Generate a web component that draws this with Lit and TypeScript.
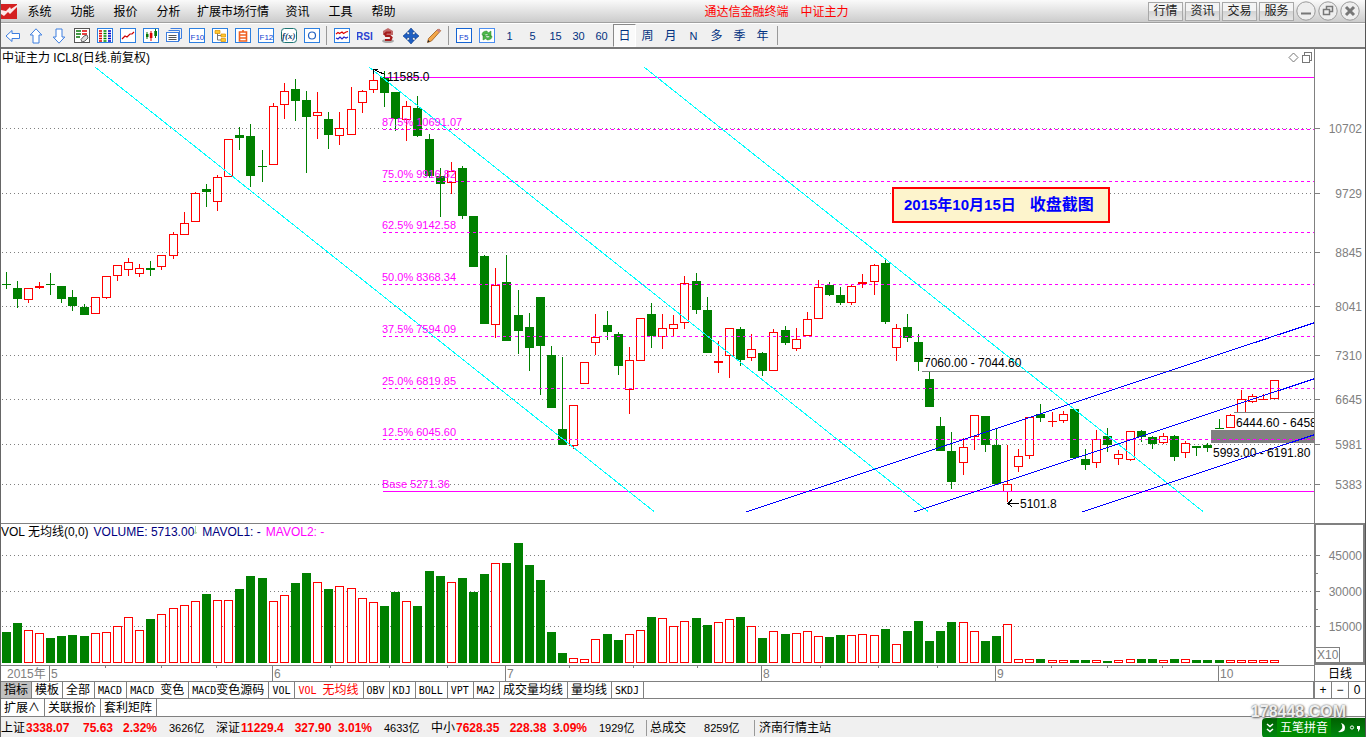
import { LitElement, html, svg, css } from "lit";
import { customElement } from "lit/decorators.js";
import { classMap } from "lit/directives/class-map.js";

type Candle = [rise: number, high: number, top: number, bottom: number, low: number, volumeTop: number];

const CANDLES: Candle[] = [
  [0,272,284,285,289,632],[0,281,288,299,308,623],[1,288,288,300,303,630],[1,282,286,288,289,633],[0,273,284,285,295,638],
  [0,286,286,299,303,636],[0,290,297,306,311,635],[0,304,307,315,315,636],[1,297,297,314,314,633],[1,276,276,298,299,632],
  [1,265,265,276,281,626],[1,258,262,270,276,617],[1,264,268,274,277,630],[0,261,268,270,276,619],[1,255,255,267,270,614],
  [1,232,234,256,259,608],[1,212,223,235,235,605],[1,192,193,222,222,601],[0,184,189,192,207,594],[1,175,177,202,211,600],
  [1,139,139,177,177,600],[0,127,135,138,150,589],[0,124,136,176,187,576],[0,150,166,167,182,578],[1,103,106,165,165,601],
  [1,83,91,105,119,595],[0,79,89,101,121,583],[0,91,100,117,173,573],[1,92,112,116,139,582],[0,112,119,135,149,589],
  [1,112,128,136,145,586],[1,87,109,135,135,588],[1,90,91,103,113,598],[1,72,80,90,93,602],[0,71,77,93,107,606],
  [0,92,92,119,131,592],[1,101,106,120,141,601],[0,96,108,136,137,606],[0,134,139,176,178,571],[0,168,176,184,217,576],
  [1,162,171,183,194,582],[0,166,168,216,219,578],[0,216,216,267,267,592],[0,255,256,324,324,574],[1,268,285,325,338,563],
  [0,255,282,341,341,563],[0,290,315,331,354,543],[0,313,327,348,371,565],[0,297,297,346,395,580],[0,346,355,408,408,632],
  [0,357,429,445,445,653],[1,405,405,446,449,658],[1,362,362,384,384,659],[1,314,337,343,355,639],[0,311,325,332,340,634],
  [0,332,334,366,375,640],[1,347,360,390,414,634],[1,318,318,361,361,630],[0,303,314,336,348,617],[1,314,328,337,349,618],
  [1,315,324,329,336,626],[1,276,283,323,329,621],[0,273,281,310,314,618],[0,297,310,353,353,625],[1,341,361,363,373,622],
  [1,328,328,356,378,619],[0,327,329,360,366,617],[1,334,349,358,361,626],[0,352,353,371,376,638],[1,329,332,371,371,631],
  [0,326,330,343,345,634],[1,328,339,349,351,633],[1,312,319,336,336,631],[1,280,287,319,319,636],[0,282,285,295,296,637],
  [0,287,295,303,305,635],[1,285,286,303,305,635],[1,274,282,284,288,634],[1,264,265,282,295,635],[0,259,263,322,324,629],
  [1,324,328,348,361,644],[0,314,327,338,342,631],[0,334,342,362,371,621],[0,372,379,407,407,641],[0,417,426,451,451,631],
  [0,432,451,482,489,622],[1,438,447,463,475,622],[1,415,415,437,450,631],[0,416,416,445,452,641],[0,428,445,484,484,636],
  [1,445,484,492,502,624],[1,449,456,467,472,659],[1,417,417,456,459,659],[0,404,414,418,422,659],[1,412,421,422,427,660],
  [1,411,414,421,423,660],[0,409,409,458,458,660],[0,449,459,465,470,660],[1,430,439,463,468,660],[0,428,436,445,452,661],
  [1,450,454,459,465,660],[1,431,431,460,461,659],[0,430,431,437,442,659],[0,436,437,444,449,659],[1,433,436,443,444,660],
  [0,435,436,457,461,659],[1,441,443,453,458,659],[0,446,446,448,456,660],[0,443,445,448,452,660],[0,419,428,429,429,660],
  [1,414,415,428,428,660],[1,390,399,413,413,660],[1,394,396,402,403,660],[1,394,399,400,400,660],[1,380,380,399,399,660],
];

const centre = (i: number) => Math.floor(6.18 + 11.127 * i);

const PRICES: [number, string][] = [
  [128, "10702"], [193, "9729"], [252, "8845"], [306, "8041"],
  [355, "7310"], [399, "6645"], [444, "5981"], [484, "5383"],
];

const LEVELS: [number, string][] = [
  [129, "87.5% 10691.07"], [181, "75.0% 9916.82"], [232, "62.5% 9142.58"], [284, "50.0% 8368.34"],
  [336, "37.5% 7594.09"], [388, "25.0% 6819.85"], [439, "12.5% 6045.60"], [491, "Base 5271.36"],
];

const VOLUMES: [number, string][] = [[555, "45000"], [591, "30000"], [626, "15000"]];

const MONTHS: [number, string][] = [[49, "5"], [272, "6"], [505, "7"], [761, "8"], [995, "9"], [1218, "10"]];
const WEEKS = [105, 161, 216, 330, 389, 447, 569, 633, 697, 820, 878, 937, 1051, 1107, 1162];

const frame = svg`<rect x="0.5" y="0.5" width="15" height="14" fill="#fff" stroke="#2c7fe0"/>`;

const ICONS: Record<string, unknown> = {
  后退: svg`<path d="M1 8L7 2.5V5.5H14.500V10.5H7V13.5Z" fill="#fff" stroke="#3d7ee0"/>`,
  向上: svg`<path d="M8 .8L13.8 7H11V15H5V7H2.2Z" fill="#fff" stroke="#3d7ee0"/>`,
  向下: svg`<path d="M8 15.2L13.8 9H11V1H5V9H2.2Z" fill="#fff" stroke="#3d7ee0"/>`,
  自选: svg`<rect x=".5" y=".5" width="15" height="14" fill="#fff" stroke="#555"/><path d="M2 3h5M2 6h5M2 9h4" stroke="#087808" stroke-width="1.4"/><path d="M8 3h5M8 6h5" stroke="#d00" stroke-width="1.4"/><path d="M7 11.500l3-3.500 3-1 1 3-3 3-3 1z" fill="#ddd" stroke="#666"/>`,
  行情表: svg`${frame}<path d="M2 3h3M2 5.500h3M2 8h3M2 10.500h3M2 13h3" stroke="#d00" stroke-width="1.300"/><path d="M6.500 3h3M6.500 5.500h3M6.500 8h3M6.500 10.500h3M6.500 13h3" stroke="#080" stroke-width="1.300"/><path d="M11 3h3M11 5.500h3M11 8h3M11 10.500h3M11 13h3" stroke="#00c" stroke-width="1.300"/>`,
  分时图: svg`${frame}<path d="M2 11l3-3 2 1 3-3h2l2-2" fill="none" stroke="#c00" stroke-width="1.2"/>`,
  K线图: svg`${frame}<path d="M4 4v7M12.500 1v9" stroke="#087808"/><path d="M8 3v10" stroke="#d00"/><path d="M3 6h2.500v3H3zM11.300 3H14v5h-2.700z" fill="#087808"/><path d="M6.800 5h2.600v5H6.800z" fill="#d00"/>`,
  多窗口: svg`<path d="M4.500 .5h11v10h-2M2.500 2.500h11v10h-1" fill="none" stroke="#3d7ee0"/><rect x=".5" y="4.500" width="12" height="9" fill="#fff" stroke="#3d7ee0"/><path d="M2.500 7.500h8M2.500 9.500h8M2.500 11.500h8" stroke="#555"/>`,
  基本资料: svg`${frame}<text x="1.500" y="11.500" class="tiny">F10</text>`,
  树状: svg`${frame}<path d="M5.500 5v7H9M5.500 7.500H9" fill="none" stroke="#777"/><path d="M3 2.500h5v3H3zM9 6h4.500v3H9zM9 10.500h4.500v3H9z" fill="#ffc830" stroke="#d89000" stroke-width=".7"/>`,
  自定: svg`${frame}<path d="M4.500 4h7v9h-7zM4.500 7h7M4.500 10h7M8 4V2" fill="none" stroke="#f06020" stroke-width="1.600"/>`,
  F12: svg`${frame}<text x="1.500" y="11.500" class="tiny">F12</text>`,
  公式: svg`<rect x=".5" y=".5" width="15" height="14" rx="3" fill="#fff" stroke="#1b7474"/><text x="1" y="11" class="fx">f(x)</text>`,
  圆: svg`${frame}<circle cx="8" cy="7.500" r="3.500" fill="none" stroke="#2060c0" stroke-width="1.200"/>`,
  指标: svg`${frame}<path d="M2 6l2-1.500 1.500 1L8 4l1.500 1.500L12 4l2-.5" fill="none" stroke="#d00" stroke-width="1.200"/><path d="M2 10l2 1 2-2 2 2 2-2 2 1 2-1" fill="none" stroke="#22c" stroke-width="1.200"/>`,
  RSI: svg`<text x="-1" y="11.500" class="rsi">RSI</text>`,
  资金: svg`<path d="M3 3l5-3 5 3v4H3z" fill="#c06a6a"/><ellipse cx="8" cy="13" rx="6" ry="2" fill="#aaa"/><path d="M11 4.500H6.500L5 6l1 2h4l1.500 1.500-1 2.500H5" fill="none" stroke="#a51c1c" stroke-width="2.200"/>`,
  移动: svg`<path d="M8 0l3.500 4h-2v2.500H12v-2L16 8l-4 3.500v-2H9.500V12h2L8 16l-3.500-4h2V9.500H4v2L0 8l4-3.500v2h2.500V4h-2z" fill="#1e5fc4" stroke="#0d3c88" stroke-width=".6"/>`,
  画线: svg`<path d="M1.500 14.500l1-4 9-9q2-1 3.200 1.200L5.500 13z" fill="#f2a64a" stroke="#9a5a20" stroke-width=".8"/><path d="M1.500 14.500l.6-2.500 1.800 1.600z" fill="#222"/><path d="M10.500 2.500l1.200-1.200q2-.8 3 1.400l-1.500 1.800z" fill="#c98080"/>`,
  F5: svg`<rect x=".5" y=".5" width="15" height="14" fill="#fff" stroke="#1463d2"/><text x="3" y="11.500" class="tiny">F5</text>`,
  刷新: svg`<rect x=".5" y=".5" width="15" height="14" fill="#fff" stroke="#4c8ef0"/><path d="M3 7q0-4 5-4l1 2 3-2v5H8l1.500-1.500Q6 5 5 8zM13 8q0 4-5 4l-1-1.500L4 12V7.500h4L6.500 9q3.500 2 4.500-1z" fill="#4cb848" stroke="#2e8a2e" stroke-width=".5"/>`,
};

const GROUPS = [
  ["后退", "向上", "向下", "自选", "行情表", "分时图", "K线图", "多窗口", "基本资料", "树状", "自定", "F12", "公式", "圆"],
  ["指标", "RSI", "资金", "移动", "画线"],
  ["F5", "刷新"],
];
const PERIODS = ["1", "5", "15", "30", "60", "日", "周", "月", "N", "多", "季", "年"];
const MENUS = ["系统", "功能", "报价", "分析", "扩展市场行情", "资讯", "工具", "帮助"];
const TABS = ["指标", "模板", "全部", "MACD", "MACD 变色", "MACD变色源码", "VOL", "VOL 无均线", "OBV", "KDJ", "BOLL", "VPT", "MA2", "成交量均线", "量均线", "SKDJ"];
const QUOTES = [
  ["上证", "3338.07", "75.63", "2.32%", "3626亿"],
  ["深证", "11229.4", "327.90", "3.01%", "4633亿"],
  ["中小", "7628.35", "228.38", "3.09%", "1929亿"],
];

@customElement("app-root")
export class AppRoot extends LitElement {
  static styles = css`
    :host {
      display: flex;
      flex-direction: column;
      position: relative;
      box-sizing: border-box;
      min-height: 100vh;
      overflow: hidden;
      border-left: 1px solid #666;
      border-right: 1px solid #555;
      background: #fff;
      color: #000;
      font: 12px/16px "Liberation Sans", "Noto Sans CJK SC", sans-serif;
    }
    button { font: inherit; color: inherit; padding: 0; margin: 0; border: 0; background: none; white-space: nowrap; }
    svg { display: block; overflow: hidden; }

    .menubar {
      display: flex;
      align-items: center;
      height: 22px;
      border-bottom: 1px solid #a0a0a0;
      background: linear-gradient(#fafafa, #ccc);
    }
    .logo { width: 17px; height: 17px; }
    .menus { display: flex; padding-top: 2px; }
    .menu { min-width: 43px; padding: 0 7px; }
    .title { flex: 1; display: flex; justify-content: center; gap: 12px; padding-top: 2px; color: #f00; }
    .modes { display: flex; gap: 2px; align-items: center; padding-right: 5px; }
    .mode {
      width: 35px;
      height: 19px;
      border: 1px solid #a8a8a8;
      color: #222;
      background: linear-gradient(#f4f4f4 45%, #d4d4d4 50%, #e6e6e6);
    }
    .round { width: 20px; height: 20px; }

    .toolbar {
      display: flex;
      align-items: center;
      height: 23px;
      border-top: 1px solid #fff;
      border-bottom: 2px solid #777;
      background: #f0f0f0;
    }
    .tool { display: flex; align-items: center; justify-content: center; width: 23px; height: 23px; color: #003080; }
    .period { font-size: 11px; }
    .cjk { font-size: 12px; }
    .pressed {
      box-sizing: border-box;
      border: 1px solid #fff;
      border-top-color: #888;
      border-left-color: #888;
      background: #fafafa;
    }
    .split { width: 3px; height: 19px; margin: 0 0 0 3px; border-left: 1px solid #999; }
    .tiny { font: 8px "Liberation Sans", sans-serif; fill: #1040d0; }
    .fx { font: italic bold 9px "Liberation Serif", serif; fill: #123c6e; }
    .rsi { font: bold 10px "Liberation Sans", sans-serif; fill: #2a3fd0; }

    .panes { display: grid; grid-template-columns: minmax(0, 1fr) 51px; }
    .pane { position: relative; min-width: 0; }
    .caption { display: flex; justify-content: space-between; height: 17px; line-height: 18px; padding: 0 2px 0 1px; }
    .corner { padding-top: 3px; }
    .axis { border-left: 1px solid #808080; }
    .axis-top { height: 17px; }
    .full { width: 100%; }
    .price { height: 457px; }
    .volume { height: 124px; }
    .pane-rule { border-top: 1px solid #808080; }
    .vol-caption { display: flex; gap: 5px; height: 16px; white-space: nowrap; }
    .navy { color: #000080; }
    .magenta { color: #f0f; }
    .down { display: inline-block; vertical-align: top; }
    .vol-axis { box-sizing: border-box; height: 142px; border: 2px solid #808080; border-bottom-width: 3px; position: relative; }
    .unit { position: absolute; left: 0; bottom: 0; padding: 0 1px; line-height: 14px; border: 1px solid #808080; border-width: 1px 1px 0 0; color: #808080; }
    .dates { height: 15px; border-top: 1px solid #808080; }
    .cycle { border-left: 1px solid #808080; text-align: center; line-height: 16px; height: 15px; padding-top: 1px; }

    .crisp { shape-rendering: crispEdges; }
    .grid { stroke: #808080; stroke-dasharray: 1 3; }
    .level { stroke: #f0f; }
    .dash { stroke-dasharray: 3 3; }
    .gray { stroke: #808080; }
    .trend { stroke: #0ff; }
    .channel { stroke: #00f; }
    .red { fill: #f00; }
    .green { fill: #008000; }
    .hollow { fill: #fff; }
    .label { font-size: 11px; fill: #f0f; }
    .note { font-size: 12px; fill: #000; }
    .scale { font-size: 12px; fill: #808080; }
    .end { text-anchor: end; }

    .memo {
      position: absolute;
      left: 891px;
      top: 138px;
      display: flex;
      align-items: center;
      gap: 14px;
      height: 32px;
      padding: 0 14px 0 10px;
      border: 2px solid #f00;
      background: #fdf4cc;
      color: #00f;
      font-weight: bold;
      font-size: 15px;
      white-space: nowrap;
    }
    .memo-text { font-size: 16px; }

    .tabs { display: flex; height: 16px; border-top: 1px solid #808080; }
    .tab { padding: 0 4px 0 3px; border-right: 1px solid #808080; line-height: 16px; white-space: pre; }
    .narrow { padding: 0 3px; }
    .on { background: #c0c0c0; }
    .chosen { color: #f00; }
    .latin { font-family: "DejaVu Sans Mono", monospace; font-size: 10px; }
    .zooms { display: flex; margin-left: auto; width: 50px; border-left: 2px solid #808080; }
    .zoom { flex: 1; border-right: 1px solid #808080; line-height: 16px; }
    .zoom:last-child { border-right: 0; }
    .second { height: 17px; border-bottom: 1px solid #808080; }

    .status {
      display: flex;
      flex: 1;
      align-items: center;
      min-height: 21px;
      background: #f0f0f0;
      white-space: nowrap;
    }
    .quote { display: grid; grid-template-columns: 25px 47px 50px 46px 47px; }
    .up { color: #f00; font-weight: bold; }
    .mid { text-align: center; }
    .small { font-size: 11px; }
    .cell { display: flex; gap: 18px; box-sizing: border-box; width: 108px; padding-left: 3px; border-left: 1px solid #999; }
    .station { border-left: 1px solid #999; padding-left: 4px; }

    .mark {
      position: absolute;
      right: 19px;
      bottom: 18px;
      font-weight: bold;
      font-size: 16px;
      color: #eee;
      text-shadow: 0 0 2px #555, 1px 1px 2px #777;
    }
    .ime {
      position: absolute;
      right: 0;
      bottom: 0;
      display: flex;
      align-items: center;
      box-sizing: border-box;
      width: 103px;
      height: 20px;
      border-radius: 4px 0 0 4px;
      background: linear-gradient(#006000, #008a10);
      color: #fff;
    }
    .ime-name { padding: 2px 3px; margin: 0 1px; background: #008c00; }
  `;

  private candle([rise, high, top, bottom, low]: Candle, i: number) {
    const x = centre(i);
    const tone = rise ? "red" : "green";
    return svg`
      <rect class=${tone} x=${x} y=${high} width="1" height=${low - high}></rect>
      <rect class=${tone} x=${x - 4} y=${top} width="9" height=${bottom - top}></rect>
      ${rise && bottom - top > 2
        ? svg`<rect class="hollow" x=${x - 3} y=${top + 1} width="7" height=${bottom - top - 2}></rect>`
        : null}`;
  }

  private bar(c: Candle, i: number) {
    return this.candle([c[0], c[5], c[5], 663, 663, 0], i);
  }

  private grid(rows: [number, string][]) {
    return rows.map(([y]) => svg`<line class="grid" x1="2" x2="100%" y1=${y + 0.5} y2=${y + 0.5}></line>`);
  }

  private priceChart() {
    return html`<svg class="full price" role="img" aria-label="日线图">
      <g transform="translate(-1 -66)">
        <g class="crisp">
          ${this.grid(PRICES)}
          ${CANDLES.map((c, i) => this.candle(c, i))}
          <path class="gray" d="M922 371.500H4000M1234 412.500H4000"></path>
          <rect x="1211" y="430" width="2000" height="13" fill="#808080"></rect>
          <path class="level" d="M385 77.500H4000"></path>
          ${LEVELS.map(([y], i) => svg`<path class="level ${i < 7 ? "dash" : ""}" d="M383 ${y + 0.5}H4000"></path>`)}
          <path class="trend" fill="none" d="M95 67L654 511.500M369 67L928 511.500M644 67L1203 511.500"></path>
          <path class="channel" d="M746 512L1315 322.500M914 512L1315 378.500M1082 512L1315 434.500"></path>
          <path d="M373.500 69.500L385 74.500M373.500 74V69.500H378M1019 503.500H1008M1012 499.500L1008 503.500L1012 507" fill="none" stroke="#000"></path>
        </g>
        ${LEVELS.map(([y, t]) => svg`<text class="label" x="382" y=${y - 3}>${t}</text>`)}
        <text class="note" x="387" y="81">11585.0</text>
        <text class="note" x="924" y="367">7060.00 - 7044.60</text>
        <text class="note" x="1020" y="508">5101.8</text>
        <text class="note" x="1236" y="427">6444.60 - 6458</text>
        <text class="note" x="1213" y="457">5993.00 - 6191.80</text>
      </g>
    </svg>`;
  }

  private latin(name: string) {
    const m = /^([A-Z0-9 ]*)(.*)$/.exec(name)!;
    return html`${m[1] ? html`<span class="latin">${m[1]}</span>` : null}${m[2]}`;
  }

  render() {
    return html`
      <header class="menubar">
        <svg class="logo" viewBox="0 0 17 17"><rect y="1" width="16" height="15" fill="#d42020"></rect><path d="M0 7l5 1 4-4 1 2 6-4v2L9 11 7 9l-4 4-3-2z" fill="#fff" opacity=".9"></path></svg>
        <nav class="menus">${MENUS.map((m) => html`<button class="menu">${m}</button>`)}</nav>
        <div class="title"><span>通达信金融终端</span><span>中证主力</span></div>
        <div class="modes">
          ${["行情", "资讯", "交易", "服务"].map((m) => html`<button class="mode">${m}</button>`)}
          ${[
            ["最小化", svg`<path d="M5 12.500h10" stroke-width="2"/>`],
            ["还原", svg`<path d="M8.500 8V5.500h6v5H12M5.500 8.500h6v5h-6z" stroke-width="1.500"/>`],
            ["关闭", svg`<path d="M6 6l8 8M14 6l-8 8" stroke-width="3"/>`],
          ].map(([n, g]) => html`<button class="round" aria-label=${n as string}>
            <svg viewBox="0 0 20 20" fill="none" stroke="#777"><circle cx="10" cy="10" r="9.200" fill="#eee" stroke="#999"></circle>${g}</svg>
          </button>`)}
        </div>
      </header>

      <div class="toolbar" role="toolbar">
        ${GROUPS.map((g, n) => html`
          ${n ? html`<span class="split"></span>` : null}
          ${g.map((k) => html`<button class="tool" aria-label=${k}><svg width="16" height="16" viewBox="0 0 16 16">${ICONS[k]}</svg></button>`)}`)}
        ${PERIODS.map((p) => html`<button class=${classMap({ tool: true, period: p < "a", cjk: p > "a", pressed: p === "日" })}>${p}</button>`)}
        <span class="split"></span>
      </div>

      <main class="panes">
        <section class="pane">
          <div class="caption">
            <span>中证主力 ICL8(日线.前复权)</span>
            <svg class="corner" width="24" height="14" fill="none" stroke="#777">
              <path d="M5.500 1L10 5.500L5.500 10L1 5.500Z"></path><path class="crisp" d="M14.500 3.500h7v7h-7zM16.500 3V.5h7v8H22"></path>
            </svg>
          </div>
          ${this.priceChart()}
          <div class="memo"><span>2015年10月15日</span><span class="memo-text">收盘截图</span></div>
        </section>
        <div class="axis">
          <div class="axis-top"></div>
          <svg class="full price">
            <g transform="translate(-1315 -66)">
              ${PRICES.map(([y, t]) => svg`
                <path class="gray crisp" d="M1315 ${y + 0.5}h5"></path>
                <text class="scale end" x="1362" y=${y + 5}>${t}</text>`)}
            </g>
          </svg>
        </div>

        <section class="pane pane-rule">
          <div class="vol-caption">
            <span>VOL 无均线(0,0)</span>
            <span class="navy">VOLUME: 5713.00<svg class="down" width="3" height="12" fill="none" stroke="#a8d8a8"><path d="M1.500 2v8M0 8l1.500 2L3 8"></path></svg></span>
            <span class="navy">MAVOL1: -</span><span class="magenta">MAVOL2: -</span>
          </div>
          <svg class="full volume" role="img" aria-label="成交量">
            <g class="crisp" transform="translate(-1 -540)">
              ${this.grid(VOLUMES)}
              ${CANDLES.map((c, i) => this.bar(c, i))}
            </g>
          </svg>
        </section>
        <div class="vol-axis">
          <svg class="full" height="137">
            <g transform="translate(-1316 -525)">
              ${VOLUMES.map(([y, t]) => svg`
                <path class="gray crisp" d="M1316 ${y + 0.5}h4"></path>
                <text class="scale end" x="1362" y=${y + 5}>${t}</text>`)}
              <path class="gray crisp" d="M1316 573.500h2M1316 609.500h2"></path>
            </g>
          </svg>
          <span class="unit">X10</span>
        </div>

        <svg class="full dates">
          <g transform="translate(-1 -665)">
            <text class="scale" x="7" y="677">2015年</text>
            ${MONTHS.map(([x, t]) => svg`
              <path class="gray crisp" d="M${x + 0.5} 665v16"></path>
              <text class="scale" x=${x + 2} y="677">${t}</text>`)}
            ${WEEKS.map((x) => svg`<path class="gray crisp" d="M${x + 0.5} 665v2"></path>`)}
          </g>
        </svg>
        <div class="cycle">日线</div>
      </main>

      <div class="tabs">
        ${TABS.map((t, i) => html`<button class=${classMap({ tab: true, narrow: i < 2, on: i === 0, chosen: i === 7 })}>${this.latin(t)}</button>`)}
        <div class="zooms">${["+", "−", "0"].map((z) => html`<button class="zoom">${z}</button>`)}</div>
      </div>
      <div class="tabs second">
        ${["扩展∧", "关联报价", "套利矩阵"].map((t) => html`<button class="tab">${t}</button>`)}
      </div>

      <footer class="status">
        ${QUOTES.map((q) => html`<div class="quote">
          <span>${q[0]}</span><span class="up">${q[1]}</span><span class="up mid">${q[2]}</span>
          <span class="up">${q[3]}</span><span class="small">${q[4]}</span>
        </div>`)}
        <div class="cell"><span>总成交</span><span class="small">8259亿</span></div>
        <div class="station">济南行情主站</div>
      </footer>

      <div class="ime">
        <svg width="14" height="20" fill="none" stroke="#fff" stroke-width="1.500"><path d="M5 6l3 2.500L11 6M5 11l3 2.500L11 11"></path></svg>
        <span class="ime-name">五笔拼音</span>
        <svg width="32" height="20" fill="#fff"><path d="M9 5q4 5-3 9q7 1 7-4.500Q13 6 9 5z"></path><circle cx="20" cy="9.500" r="1.600" fill="none" stroke="#fff"></circle><path d="M25 8h3v3l-2 3v-3h-1z"></path></svg>
      </div>
      <div class="mark">178448.COM</div>
    `;
  }
}
